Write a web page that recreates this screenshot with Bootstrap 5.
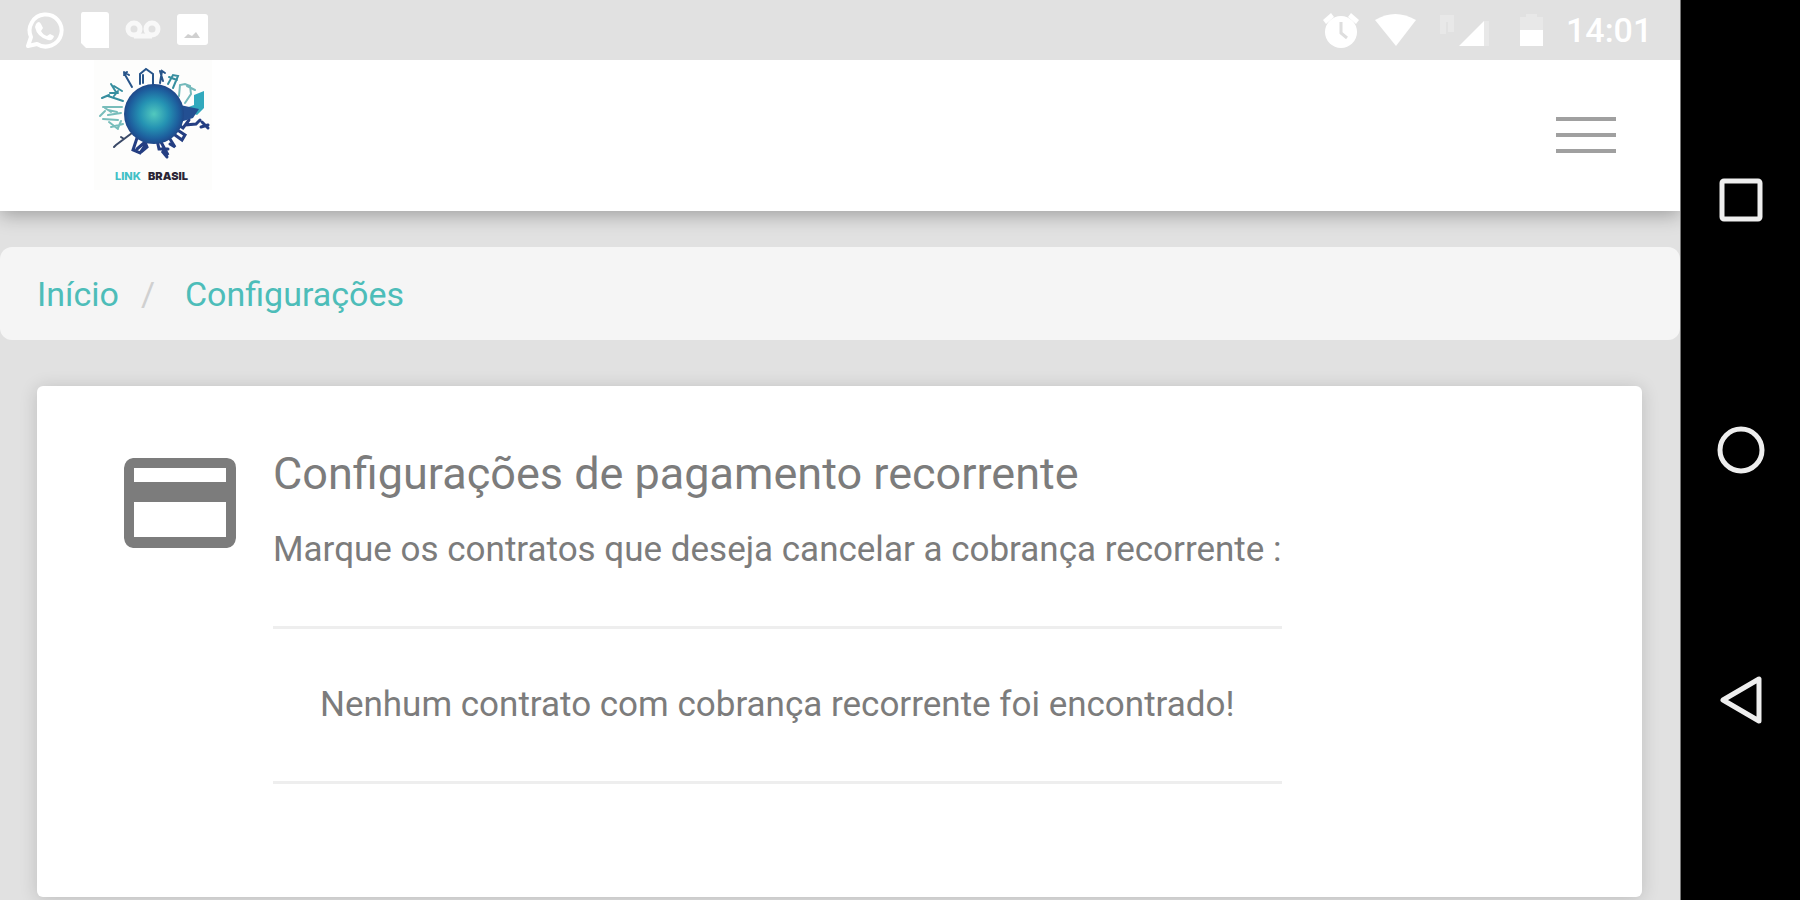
<!DOCTYPE html>
<html lang="pt-BR">
<head>
<meta charset="utf-8">
<meta name="viewport" content="width=device-width, initial-scale=1">
<title>Configurações</title>
<link rel="stylesheet" href="https://cdn.jsdelivr.net/npm/bootstrap@5.3.0/dist/css/bootstrap.min.css">
<style>
  body { font-family: Roboto, "Open Sans", sans-serif; background: #e1e1e1; color: #7c7c7c; }
  svg { display: block; flex: none; }
  .status-bar { height: 60px; padding: 0 26px 0 25px; color: #fff; background: #e1e1e1; z-index: 2; }
  .clock { font-size: 34px; line-height: 40px; font-weight: 500; width: 88px; }
  .app-header { height: 151px; padding: 0 64px 0 94px; box-shadow: 0 4px 18px rgba(0,0,0,.3); z-index: 1; }
  .menu-btn { width: 60px; height: 37px; gap: 12px; }
  .menu-btn span { height: 4px; background: #a0a0a0; }
  .crumbs { margin-top: 36px; height: 93px; padding: 0 37px; border-radius: 12px; background: #f5f5f5; font-size: 34px; line-height: 40px; --bs-breadcrumb-divider-color: #d0d0d0; }
  .crumbs .breadcrumb-item + .breadcrumb-item { padding-left: 22px; }
  .crumbs .breadcrumb-item + .breadcrumb-item::before { padding-right: 30px; }
  .crumbs a { color: #4dbdb9; }
  .settings-card { margin: 46px 38px 3px 37px; padding: 64px 86px; border: 0; border-radius: 6px; box-shadow: 0 2px 18px rgba(0,0,0,.16); color: inherit; }
  .settings-title { font-size: 45px; line-height: 48px; }
  .settings-text { font-size: 35px; line-height: 40px; }
  .lead-in { margin-top: 32px; }
  .settings-body { gap: 36px; }
  .notice { margin-top: 56px; padding: 56px 0; border: solid #eee; border-width: 3px 0; }
  .system-nav { width: 120px; gap: 200px; border-left: 1px solid #777; background: #000; }
</style>
</head>
<body>
<div class="d-flex min-vh-100">
  <div class="d-flex flex-column flex-grow-1 overflow-hidden">
    <div class="status-bar position-relative d-flex align-items-center justify-content-between">
      <svg width="190" height="60" viewBox="25 0 190 60" aria-hidden="true">
        <g fill="none" stroke="#fff" stroke-width="4">
          <path d="M28 46l3-9a16 16 0 1 1 6 7z" stroke-linejoin="round"/>
        </g>
        <path d="M36 24q3-4 5 0l2 4-2 3q2 4 6 5l3-2 4 2q-1 5-6 4-11-3-13-13z" fill="#fff"/>
        <path d="M83 12h23q3 0 3 3v33H86l-5-5V15q0-3 2-3z" fill="#fff"/>
        <g fill="none" stroke="#f8f8f8" stroke-width="5"><circle cx="134" cy="29" r="6"/><circle cx="152" cy="29" r="6"/><path d="M134 36h18"/></g>
        <path d="M180 14h25q3 0 3 3v25q0 3-3 3h-25q-3 0-3-3V17q0-3 3-3z" fill="#fff"/>
        <path d="M184 38l4-4 4 2 4-4 4 6z" fill="#d0d0d0"/>
      </svg>
      <div class="d-flex align-items-center">
        <svg width="245" height="60" viewBox="1320 0 245 60" aria-hidden="true">
          <g fill="#fff"><circle cx="1340" cy="32" r="16"/><path d="M1322 20l8-7 3 4-8 7zM1347 17l3-4 8 7-3 4z"/>
          <path d="M1374 20q20-12 41 0l-20 26z"/><path d="M1458 46l25-25v25z"/><path d="M1519 30h23v16h-23z"/></g>
          <path d="M1340 22v11l6 5" fill="none" stroke="#dedede" stroke-width="3"/>
          <path d="M1439 15h14v17h-6V22h-2v12h-6zM1483 21h5v25h-5zM1519 17h6v-3h11v3h6v13h-23z" fill="#e8e8e8"/>
        </svg>
        <time class="clock">14:01</time>
      </div>
    </div>

    <header class="app-header bg-white d-flex align-items-center justify-content-between position-relative">
      <a href="#" class="align-self-start" aria-label="Link Brasil">
        <svg width="118" height="130" viewBox="94 60 118 130">
          <defs><radialGradient id="globe" cx="50%" cy="50%" r="52%"><stop offset="0" stop-color="#52c9be"/><stop offset=".45" stop-color="#2593b3"/><stop offset=".8" stop-color="#1d5f9e"/><stop offset="1" stop-color="#204284"/></radialGradient></defs>
          <path fill="#fdfdfc" d="M94 60h118v130H94z"/>
          <g fill="none" stroke-width="2" stroke-linecap="round">
            <path stroke="#28558a" d="M132 87l-8-14m5 2l-5-3m0 3l3-3M140 84V74l6-5 7 5v10M143 83V75M160 83l2-12 3 2m-5-2l3 10"/>
            <path stroke="#378e9f" d="M168 84l5-9 5 1-5 12m-4-11l8 3M122 91l-8-5m2 6l-5-8m7 9l-8 0M123 101l-15-5m-6 2l7-3m5 1l4-5"/>
            <path stroke="#78bdbb" d="M122 107l-19 0m5 3l9 2m-14 7l15 1m-10-5l13-2m-16-2l-5 5m5-8l6 4m0 15l12-3m-14-2l9 7m3-8l-3 7"/>
            <path stroke="#74b9bb" d="M179 96l1-11 5-1 5 2 1 8-6 9m2-17l8 4"/>
            <path stroke="#3a4967" d="M132 133l-16 12-2 2m7-10l3 2"/>
            <path stroke="#243e82" stroke-width="3" d="M137 138l-4 12 7 3 6-9m-9 5l8-7 2 5-6 5M157 140l2 9 9 0m-7-7l7 13-6-4 5 6M170 139l5 8-5-3M175 135l7 5 3-5-6-4m-2-7l6 4 6-8m-4 5l11-1 4-4m1 7l7-2m-6-3l6 6"/>
          </g>
          <path fill="#32a9bd" d="M194 95l10-4v17l-7 7-14-6 11-4z"/>
          <path fill="#234f92" d="M180 105l19 4-6 9-16 5z"/>
          <circle cx="154" cy="114" r="30" fill="url(#globe)"/>
          <text x="115" y="180" font-family="Inter, sans-serif" font-size="11" font-weight="800" fill="#42c0c6">LINK</text>
          <text x="148" y="180" font-family="Inter, sans-serif" font-size="11" font-weight="900" fill="#2c2636">BRASIL</text>
        </svg>
      </a>
      <button type="button" class="menu-btn btn p-0 border-0 rounded-0 d-flex flex-column" aria-label="Menu">
        <span class="w-100"></span><span class="w-100"></span><span class="w-100"></span>
      </button>
    </header>

    <nav aria-label="Trilha">
      <ol class="crumbs breadcrumb align-items-center mb-0">
        <li class="breadcrumb-item"><a href="#" class="text-decoration-none">Início</a></li>
        <li class="breadcrumb-item"><a href="#" class="text-decoration-none">Configurações</a></li>
      </ol>
    </nav>

    <main class="settings-card card flex-grow-1">
      <div class="settings-body d-flex align-items-start">
        <svg width="114" height="102" viewBox="0 0 114 102" aria-hidden="true">
          <path fill="#7c7c7c" fill-rule="evenodd" d="M10 8H104Q113 9 113 18V88Q112 97 104 98H10Q2 97 1 88V18Q2 9 10 8zM11 18V32H103V18zM11 52V87H103V52z"/>
        </svg>
        <section>
          <h1 class="settings-title fw-normal mb-0">Configurações de pagamento recorrente</h1>
          <p class="settings-text lead-in mb-0">Marque os contratos que deseja cancelar a cobrança recorrente :</p>
          <p class="settings-text notice mb-0 text-center">Nenhum contrato com cobrança recorrente foi encontrado!</p>
        </section>
      </div>
    </main>
  </div>

  <nav class="system-nav d-flex flex-column align-items-center justify-content-center flex-shrink-0" aria-label="Sistema">
    <button type="button" class="btn p-0 border-0" aria-label="Recentes"><svg width="50" height="50" fill="none" stroke="#eee" stroke-width="5"><rect x="6" y="6" width="38" height="38" rx="2"/></svg></button>
    <button type="button" class="btn p-0 border-0" aria-label="Início"><svg width="50" height="50" fill="none" stroke="#eee" stroke-width="5"><circle cx="25" cy="25" r="21"/></svg></button>
    <button type="button" class="btn p-0 border-0" aria-label="Voltar"><svg width="50" height="50" fill="none" stroke="#eee" stroke-width="5" stroke-linejoin="round"><path d="M43 4v42L7 25z"/></svg></button>
  </nav>
</div>
<script src="https://cdn.jsdelivr.net/npm/bootstrap@5.3.0/dist/js/bootstrap.bundle.min.js"></script>
</body>
</html>
